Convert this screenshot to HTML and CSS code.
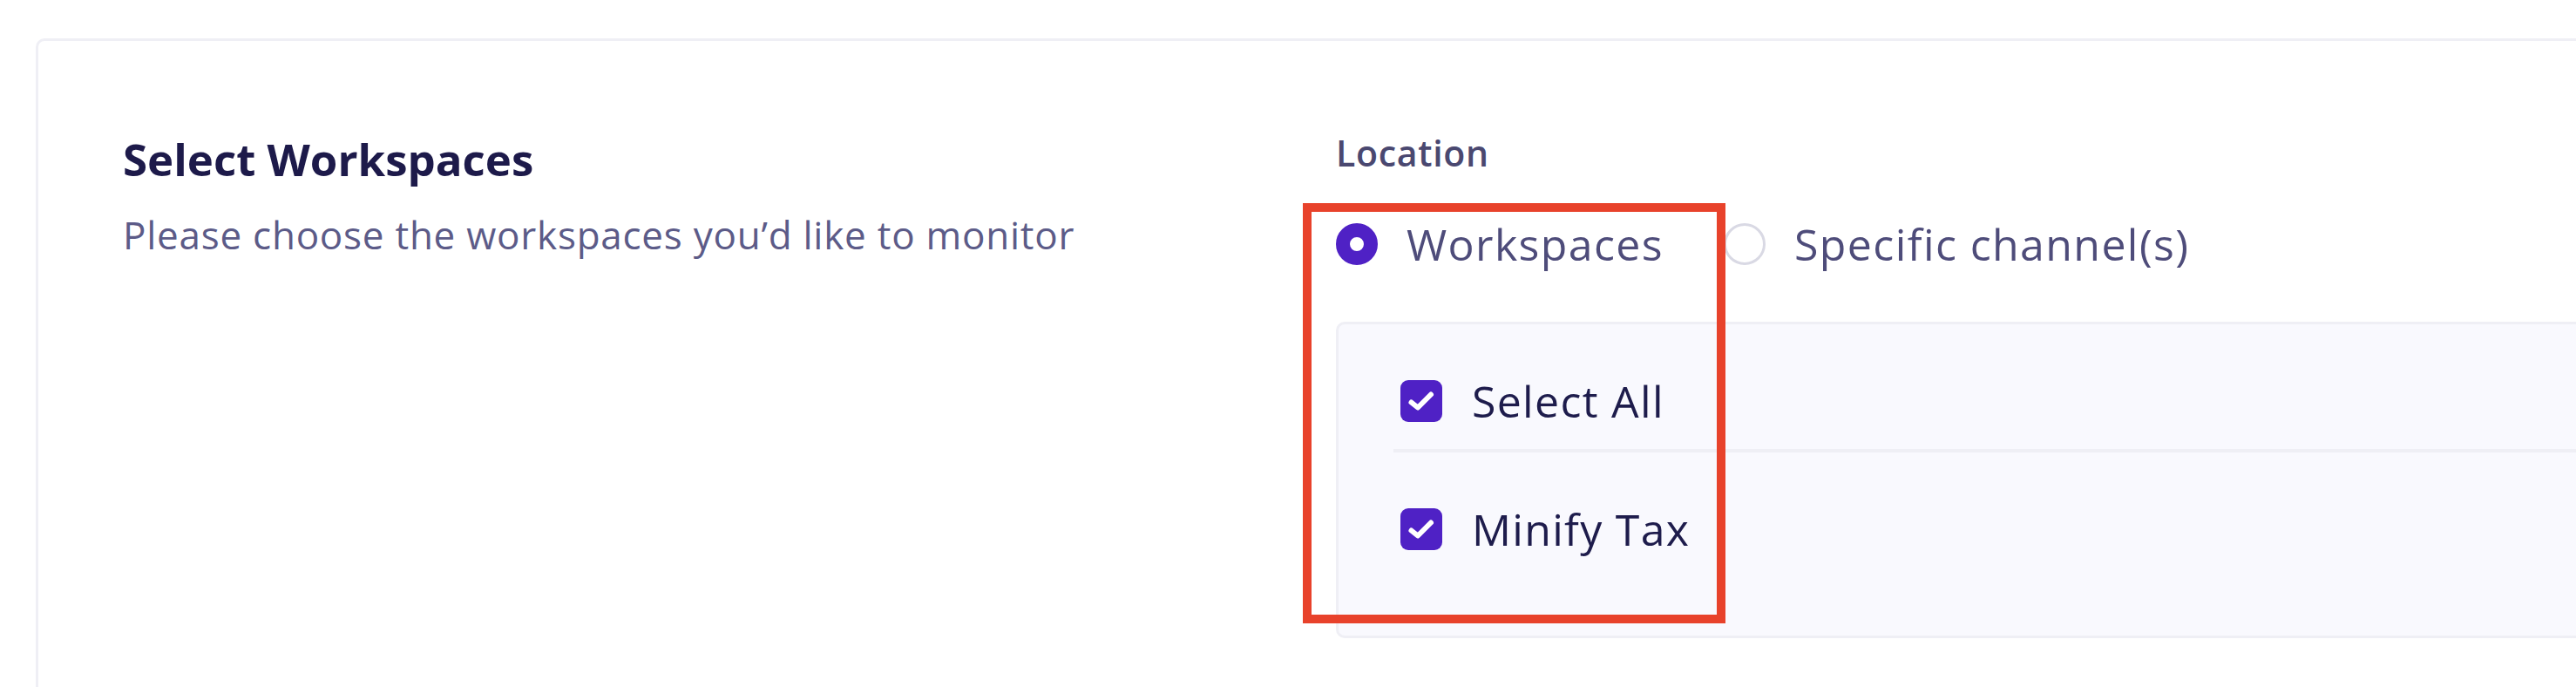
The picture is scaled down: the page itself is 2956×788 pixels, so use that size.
FILE: index.html
```html
<!DOCTYPE html>
<html lang="en">
<head>
<meta charset="utf-8">
<title>Select Workspaces</title>
<link rel="stylesheet" href="styles.css">
</head>
<body>
<div class="page">
  <section class="card">
    <div class="intro">
      <h2 class="title">Select Workspaces</h2>
      <p class="subtitle">Please choose the workspaces you’d like to monitor</p>
    </div>
    <div class="settings">
      <div class="field-label">Location</div>
      <div class="radio-group">
        <label class="radio-item">
          <span class="radio radio-on"></span>
          <span class="radio-text">Workspaces</span>
        </label>
        <label class="radio-item">
          <span class="radio"></span>
          <span class="radio-text">Specific channel(s)</span>
        </label>
      </div>
      <div class="panel">
        <div class="check-row check-row-first">
          <span class="checkbox">
            <svg viewBox="0 0 48 48" width="48" height="48"><path d="M12.5 25.5 L20 31.5 L35 16.5" fill="none" stroke="#ffffff" stroke-width="6" stroke-linecap="round" stroke-linejoin="round"/></svg>
          </span>
          <span class="check-text">Select All</span>
        </div>
        <div class="check-row">
          <span class="checkbox">
            <svg viewBox="0 0 48 48" width="48" height="48"><path d="M12.5 25.5 L20 31.5 L35 16.5" fill="none" stroke="#ffffff" stroke-width="6" stroke-linecap="round" stroke-linejoin="round"/></svg>
          </span>
          <span class="check-text">Minify Tax</span>
        </div>
      </div>
    </div>
  </section>
  <div class="highlight"></div>
</div>
</body>
</html>
```

FILE: styles.css
```css
html, body {
  margin: 0;
  padding: 0;
  background: #ffffff;
  overflow: hidden;
}

body {
  width: 2956px;
  height: 788px;
  font-family: "Open Sans", "Lato", "Liberation Sans", sans-serif;
}

.page {
  position: relative;
  width: 2956px;
  height: 788px;
  overflow: hidden;
  padding: 44px 0 0 41px;
  box-sizing: border-box;
}

.card {
  width: 3000px;
  height: 900px;
  box-sizing: border-box;
  border: 3px solid #efeff5;
  border-radius: 10px;
  background: #ffffff;
  display: flex;
  padding: 109px 0 0 97px;
}

.intro {
  width: 1392px;
  flex: none;
}

.title {
  margin: 0;
  font-size: 51px;
  line-height: 52px;
  font-weight: 700;
  color: #1d1a4a;
}

.subtitle {
  margin: 40px 0 0;
  font-size: 44px;
  line-height: 43px;
  font-weight: 400;
  letter-spacing: 0.75px;
  color: #5c5b88;
}

.settings {
  flex: none;
  width: 1500px;
}

.field-label {
  font-size: 41px;
  line-height: 38px;
  font-weight: 600;
  letter-spacing: 0.7px;
  color: #4a4870;
}

.radio-group {
  display: flex;
  gap: 69px;
  margin-top: 62px;
}

.radio-item {
  display: flex;
  align-items: center;
  gap: 33px;
}

.radio {
  width: 48px;
  height: 48px;
  box-sizing: border-box;
  border-radius: 50%;
  border: 3px solid #d9d9e4;
  background: #ffffff;
  flex: none;
}

.radio-on {
  border: 16px solid #4f21c5;
}

.radio-text {
  font-size: 50px;
  line-height: 48px;
  letter-spacing: 1.4px;
  color: #4e4c7a;
}

.panel {
  margin-top: 65px;
  height: 363px;
  box-sizing: border-box;
  border: 3px solid #efeff5;
  border-radius: 10px;
  background: #f9f9fe;
  padding-left: 63px;
}

.check-row {
  display: flex;
  align-items: center;
  gap: 34px;
  padding: 64px 0 0 8px;
}

.check-row-first {
  padding-bottom: 31px;
  border-bottom: 4px solid #efeff5;
}

.checkbox {
  width: 48px;
  height: 48px;
  border-radius: 9px;
  background: #4f21c5;
  flex: none;
  display: flex;
}

.check-text {
  font-size: 50px;
  line-height: 48px;
  letter-spacing: 1.3px;
  color: #1e1c4c;
}

.highlight {
  position: absolute;
  left: 1495px;
  top: 233px;
  width: 485px;
  height: 482px;
  box-sizing: border-box;
  border: 10px solid #e8422b;
}
```
